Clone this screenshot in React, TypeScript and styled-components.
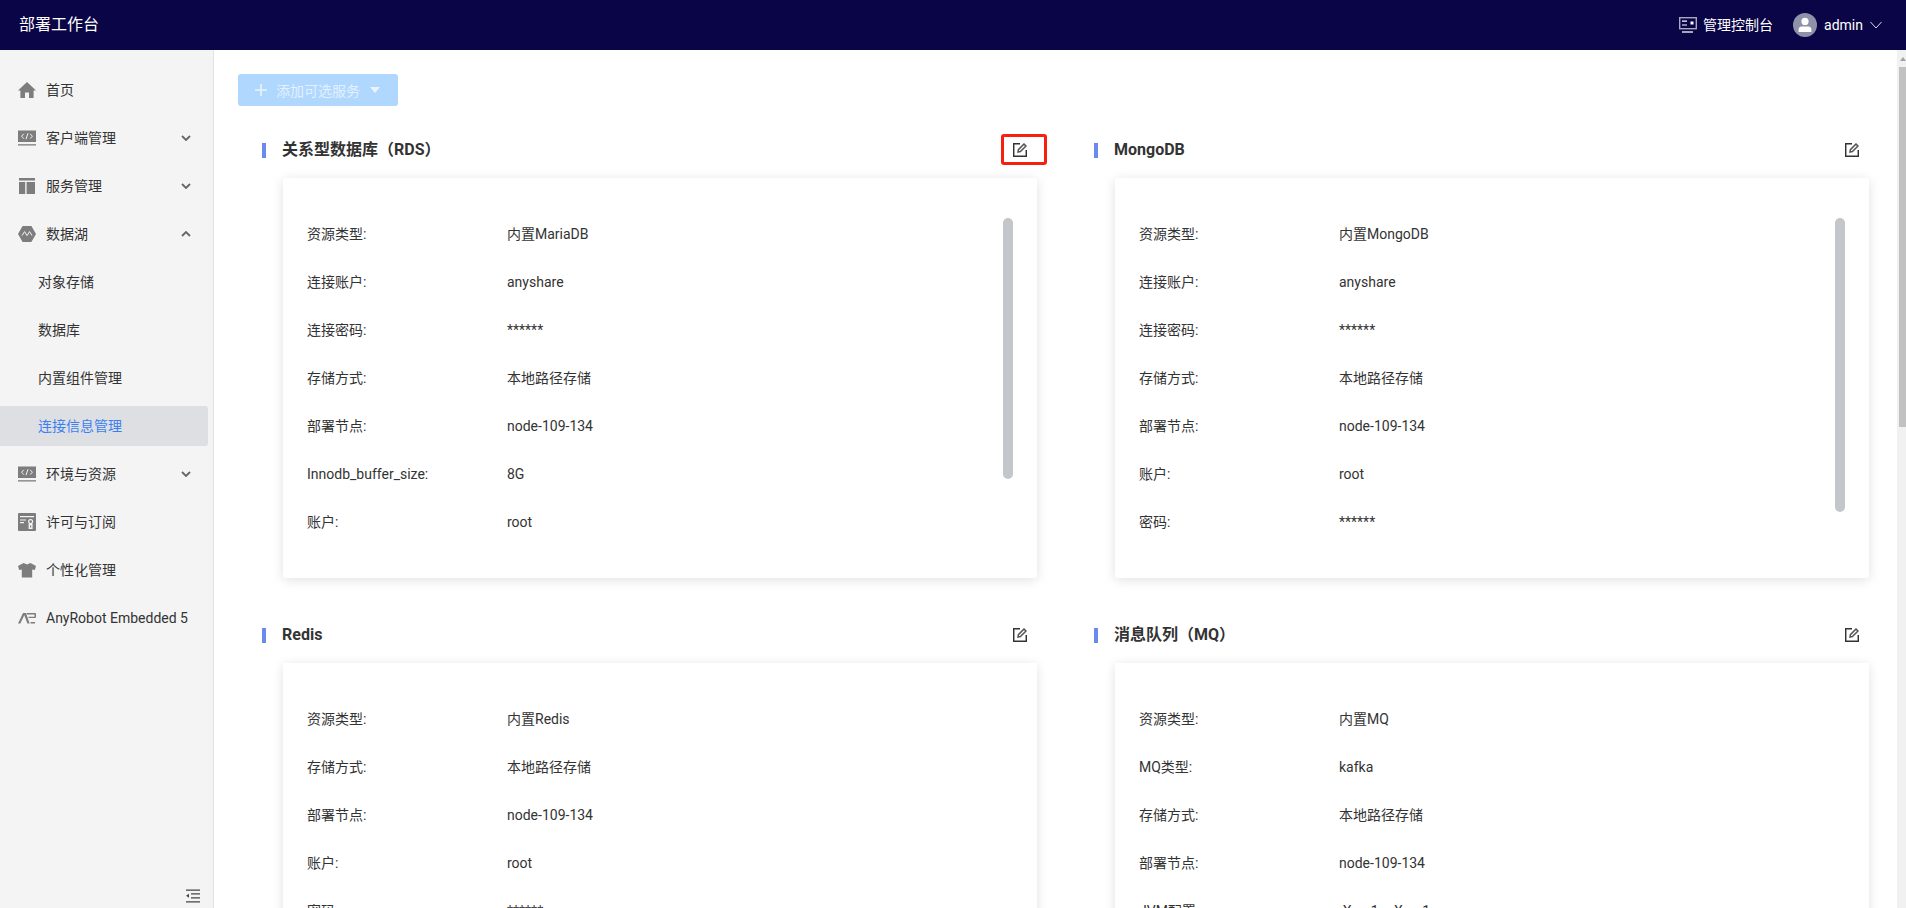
import React from "react";
import styled, { createGlobalStyle } from "styled-components";

const FONT = `Roboto, "Noto Sans CJK SC", sans-serif`;

const GlobalStyle = createGlobalStyle`
  html, body {
    margin: 0;
    height: 100%;
    overflow: hidden;
  }
  body {
    font-family: ${FONT};
    font-size: 14px;
    line-height: 22px;
    color: #333;
  }
  #root {
    height: 100%;
  }
`;

const Page = styled.div`
  display: flex;
  flex-direction: column;
  height: 100vh;
`;

const TopBar = styled.header`
  flex: none;
  height: 50px;
  background: #0a0546;
  color: #fff;
  display: flex;
  align-items: center;
  padding: 0 24px 0 19px;
`;

const Brand = styled.div`
  font-size: 16px;
  flex: 1;
`;

const ConsoleLink = styled.div`
  display: flex;
  align-items: center;
  gap: 6px;
  margin-right: 20px;
`;

const Avatar = styled.svg`
  width: 24px;
  height: 24px;
  margin-right: 7px;
`;

const UserName = styled.span`
  margin-right: 7px;
`;

const Body = styled.div`
  flex: 1;
  display: flex;
  min-height: 0;
`;

const Sidebar = styled.aside`
  flex: none;
  box-sizing: border-box;
  width: 214px;
  background: #f4f4f4;
  border-right: 1px solid #e2e2e2;
  display: flex;
  flex-direction: column;
  padding-top: 20px;
`;

const Menu = styled.nav`
  display: flex;
  flex-direction: column;
  gap: 8px;
`;

const MenuRow = styled.div<{ $child?: boolean; $active?: boolean }>`
  height: 40px;
  width: 208px;
  box-sizing: border-box;
  display: flex;
  align-items: center;
  gap: 10px;
  padding: 0 17px 1px ${(p) => (p.$child ? 38 : 18)}px;
  color: ${(p) => (p.$active ? "#3b7ff2" : "#333")};
  background: ${(p) => (p.$active ? "#dedfe3" : "transparent")};
  border-radius: ${(p) => (p.$active ? "0 3px 3px 0" : "0")};
`;

const MenuLabel = styled.span`
  flex: 1;
  white-space: nowrap;
`;

const IconBox = styled.svg`
  flex: none;
  width: 18px;
  height: 18px;
  fill: #7d7d7d;
`;

const Chevron = styled.svg<{ $up?: boolean }>`
  flex: none;
  width: 10px;
  height: 6px;
  fill: none;
  stroke: #666;
  stroke-width: 1.8;
  transform: ${(p) => (p.$up ? "rotate(180deg)" : "none")};
`;

const CollapseBar = styled.div`
  margin-top: auto;
  display: flex;
  justify-content: flex-end;
  padding: 0 13px 5px 0;
`;

const Main = styled.main`
  flex: 1;
  min-width: 0;
  overflow: hidden;
  background: #fff;
`;

const PageScrollbar = styled.div`
  flex: none;
  width: 9px;
  background: #f1f1f1;
  display: flex;
  flex-direction: column;
  align-items: flex-end;
`;

const ScrollArrow = styled.div`
  height: 17px;
  width: 7px;
  display: flex;
  align-items: center;
  justify-content: center;
`;

const ArrowGlyph = styled.span`
  border-left: 3.5px solid transparent;
  border-right: 3.5px solid transparent;
  border-bottom: 4px solid #a3a3a3;
`;

const PageThumb = styled.div`
  width: 7px;
  height: 360px;
  background: #c1c1c1;
`;

const Content = styled.div`
  padding: 24px 19px 0 24px;
`;

const AddButton = styled.button`
  display: flex;
  align-items: center;
  height: 32px;
  width: 160px;
  box-sizing: border-box;
  padding: 0 0 0 17px;
  border: none;
  border-radius: 3px;
  background: #b0d7fe;
  color: #e3f0fe;
  font-family: ${FONT};
  font-size: 14px;
  margin-bottom: 28px;
`;

const PlusIcon = styled.svg`
  width: 12px;
  height: 12px;
  fill: #eaf4ff;
  margin-right: 9px;
`;

const CaretIcon = styled.svg`
  width: 10px;
  height: 6px;
  fill: #eaf4ff;
  margin-left: 10px;
`;

const SectionGrid = styled.div`
  display: grid;
  grid-template-columns: 1fr 1fr;
  column-gap: 48px;
  row-gap: 41px;
  padding-left: 24px;
`;

const SectionHead = styled.div`
  height: 32px;
  display: flex;
  align-items: center;
  margin-bottom: 12px;
`;

const TitleBar = styled.span`
  width: 4px;
  height: 15px;
  background: #6a8bec;
  margin-right: 16px;
`;

const Title = styled.h3`
  flex: 1;
  margin: 0;
  font-size: 16px;
  font-weight: 700;
  color: #333;
`;

const EditButton = styled.span`
  position: relative;
  display: flex;
  margin-right: 19px;
`;

const EditIcon = styled.svg`
  width: 14px;
  height: 14px;
  fill: none;
  stroke: #333;
  stroke-width: 1.5;
`;

const Highlight = styled.span`
  position: absolute;
  left: -12px;
  top: -9px;
  box-sizing: border-box;
  width: 46px;
  height: 31px;
  border: 3px solid #f5200f;
  border-radius: 3px;
`;

const Card = styled.div`
  position: relative;
  box-sizing: border-box;
  height: 400px;
  margin: 0 9px 0 21px;
  padding: 32px 24px 0;
  background: #fff;
  border-radius: 3px;
  box-shadow: 0 2px 12px rgba(0, 0, 0, 0.12);
  overflow: hidden;
`;

const InfoRow = styled.div`
  box-sizing: border-box;
  height: 48px;
  padding-bottom: 1px;
  display: flex;
  align-items: center;
`;

const InfoLabel = styled.span`
  width: 200px;
  flex: none;
  color: #333;
`;

const InfoValue = styled.span`
  color: #333;
`;

const ScrollThumb = styled.div`
  position: absolute;
  top: 40px;
  right: 24px;
  width: 10px;
  border-radius: 5px;
  background: #c3c6cb;
`;

function HomeIcon() {
  return (
    <IconBox viewBox="0 0 18 18">
      <path d="M9 1 18 9.500H15.600V17H11V11.500H7V17H2.400V9.500H0Z" />
    </IconBox>
  );
}

function CodeIcon() {
  return (
    <IconBox viewBox="0 0 18 18">
      <path d="M0 1.500h18v11.500H0z" />
      <path d="M0 15.200h18v1.300H0z" />
      <path d="M5.800 4.800 3.600 7.200l2.200 2.400M12.200 4.800l2.200 2.400-2.200 2.400M10 4.200 8 10.200" fill="none" stroke="#f4f4f4" strokeWidth="1" />
    </IconBox>
  );
}

function LayoutIcon() {
  return (
    <IconBox viewBox="0 0 18 18">
      <path d="M1 1h16v2.400H1zM1 5h6.200v12H1zM8.600 5H17v12H8.600z" />
    </IconBox>
  );
}

function LakeIcon() {
  return (
    <IconBox viewBox="0 0 18 18">
      <path d="M4.600 1h8.800L18 9l-4.600 8H4.600L0 9z" />
      <path d="M4 10.600 6.600 6.600 9 10.600 11.600 6.600 14 10.600" fill="none" stroke="#f4f4f4" strokeWidth="1" />
    </IconBox>
  );
}

function LicenseIcon() {
  return (
    <IconBox viewBox="0 0 18 18">
      <path d="M1 0h16a1 1 0 0 1 1 1v16a1 1 0 0 1-1 1H1a1 1 0 0 1-1-1V1a1 1 0 0 1 1-1z" />
      <path d="M2 3h14v1.200H2zM2 6.400h6v1.200H2zM2 9h4v1.200H2z" fill="#f4f4f4" />
      <circle cx="12.600" cy="8.600" r="2" fill="none" stroke="#f4f4f4" strokeWidth="1.100" />
      <path d="M10.600 11h4v5h-4z" fill="#f4f4f4" />
      <path d="M12 12.400h1.200v2.200H12z" />
    </IconBox>
  );
}

function ShirtIcon() {
  return (
    <IconBox viewBox="0 0 18 18">
      <path d="M5.600 2 9 3.400 12.400 2 18 5l-1.200 4-2.600-.6V16.600H3.800V8.400L1.200 9 0 5z" />
    </IconBox>
  );
}

function RobotIcon() {
  return (
    <IconBox viewBox="0 0 18 18">
      <path d="M0 14.500 5 4h3l3.600 10.500H9.400L6.300 6.200 2.300 14.500z" />
      <path d="M8.500 4H17a1 1 0 0 1 1 1v3a1 1 0 0 1-1 1h-6.500V7.700h6V5.400H9z" />
      <path d="M12.500 13h4.500v1.500h-4.500z" />
    </IconBox>
  );
}

function DownChevron({ up }: { up?: boolean }) {
  return (
    <Chevron $up={up} viewBox="0 0 10 6">
      <path d="M1 1l4 4 4-4" />
    </Chevron>
  );
}

type MenuEntry = {
  label: string;
  icon?: React.ReactElement;
  arrow?: "up" | "down";
  child?: boolean;
  active?: boolean;
};

const menu: MenuEntry[] = [
  { label: "首页", icon: <HomeIcon /> },
  { label: "客户端管理", icon: <CodeIcon />, arrow: "down" },
  { label: "服务管理", icon: <LayoutIcon />, arrow: "down" },
  { label: "数据湖", icon: <LakeIcon />, arrow: "up" },
  { label: "对象存储", child: true },
  { label: "数据库", child: true },
  { label: "内置组件管理", child: true },
  { label: "连接信息管理", child: true, active: true },
  { label: "环境与资源", icon: <CodeIcon />, arrow: "down" },
  { label: "许可与订阅", icon: <LicenseIcon /> },
  { label: "个性化管理", icon: <ShirtIcon /> },
  { label: "AnyRobot Embedded 5", icon: <RobotIcon /> }
];

type SectionData = {
  title: string;
  highlight?: boolean;
  thumb?: number;
  rows: [string, string][];
};

const sections: SectionData[] = [
  {
    title: "关系型数据库（RDS）",
    highlight: true,
    thumb: 261,
    rows: [
      ["资源类型:", "内置MariaDB"],
      ["连接账户:", "anyshare"],
      ["连接密码:", "******"],
      ["存储方式:", "本地路径存储"],
      ["部署节点:", "node-109-134"],
      ["Innodb_buffer_size:", "8G"],
      ["账户:", "root"]
    ]
  },
  {
    title: "MongoDB",
    thumb: 294,
    rows: [
      ["资源类型:", "内置MongoDB"],
      ["连接账户:", "anyshare"],
      ["连接密码:", "******"],
      ["存储方式:", "本地路径存储"],
      ["部署节点:", "node-109-134"],
      ["账户:", "root"],
      ["密码:", "******"]
    ]
  },
  {
    title: "Redis",
    rows: [
      ["资源类型:", "内置Redis"],
      ["存储方式:", "本地路径存储"],
      ["部署节点:", "node-109-134"],
      ["账户:", "root"],
      ["密码:", "******"]
    ]
  },
  {
    title: "消息队列（MQ）",
    rows: [
      ["资源类型:", "内置MQ"],
      ["MQ类型:", "kafka"],
      ["存储方式:", "本地路径存储"],
      ["部署节点:", "node-109-134"],
      ["JVM配置:", "-Xmx1g -Xms1g"]
    ]
  }
];

function Section({ data }: { data: SectionData }) {
  return (
    <section>
      <SectionHead>
        <TitleBar />
        <Title>{data.title}</Title>
        <EditButton>
          <EditIcon viewBox="0 0 14 14">
            <path d="M7 .7H.7v12.600h12.600V7" />
            <path d="M5 9l.4-2.400L11 1l2 2-5.600 5.600z" stroke="#555" />
          </EditIcon>
          {data.highlight && <Highlight />}
        </EditButton>
      </SectionHead>
      <Card>
        {data.rows.map(([label, value]) => (
          <InfoRow key={label}>
            <InfoLabel>{label}</InfoLabel>
            <InfoValue>{value}</InfoValue>
          </InfoRow>
        ))}
        {data.thumb && <ScrollThumb style={{ height: data.thumb }} />}
      </Card>
    </section>
  );
}

export default function App(): React.ReactElement {
  return (
    <Page>
      <GlobalStyle />
      <TopBar>
        <Brand>部署工作台</Brand>
        <ConsoleLink>
          <svg width="18" height="18" viewBox="0 0 18 18" fill="none">
            <rect x="0.7" y="1.7" width="16.6" height="11" stroke="#a9a7c4" strokeWidth="1.4" />
            <path d="M3 5.200h5M3 9h5" stroke="#fff" strokeWidth="1.200" />
            <path d="M11.500 5.500h3v3h-3z" fill="#fff" />
            <path d="M3 16h11" stroke="#fff" strokeWidth="1.300" />
          </svg>
          管理控制台
        </ConsoleLink>
        <Avatar viewBox="0 0 24 24">
          <circle cx="12" cy="12" r="12" fill="#8e92a9" />
          <circle cx="12" cy="8.400" r="3.600" fill="#fff" />
          <path d="M5.600 19v-2.400c0-2 1.400-3.200 3.200-3.200h6.400c1.800 0 3.200 1.200 3.200 3.200V19z" fill="#fff" />
        </Avatar>
        <UserName>admin</UserName>
        <svg width="12" height="8" viewBox="0 0 12 8" fill="none">
          <path d="M.5 1 6 7l5.500-6" stroke="#d9d8e6" strokeWidth="1" />
        </svg>
      </TopBar>
      <Body>
        <Sidebar>
          <Menu>
            {menu.map((item) => (
              <MenuRow key={item.label} $child={item.child} $active={item.active}>
                {item.icon}
                <MenuLabel>{item.label}</MenuLabel>
                {item.arrow && <DownChevron up={item.arrow === "up"} />}
              </MenuRow>
            ))}
          </Menu>
          <CollapseBar>
            <svg width="14" height="14" viewBox="0 0 14 14">
              <path d="M0 .5h14v1.200H0zM5 4.200h9v1.200H5zM5 8.200h9v1.200H5zM0 12.300h14v1.200H0z" fill="#444" />
              <path d="M3 4.800v4L0 6.800z" fill="#444" />
            </svg>
          </CollapseBar>
        </Sidebar>
        <Main>
          <Content>
            <AddButton type="button" disabled>
              <PlusIcon viewBox="0 0 12 12">
                <path d="M5.200 0h1.600v5.200H12v1.600H6.800V12H5.200V6.800H0V5.200h5.200z" />
              </PlusIcon>
              添加可选服务
              <CaretIcon viewBox="0 0 10 6">
                <path d="M0 0h10L5 6z" />
              </CaretIcon>
            </AddButton>
            <SectionGrid>
              {sections.map((s) => (
                <Section key={s.title} data={s} />
              ))}
            </SectionGrid>
          </Content>
        </Main>
        <PageScrollbar>
          <ScrollArrow>
            <ArrowGlyph />
          </ScrollArrow>
          <PageThumb />
        </PageScrollbar>
      </Body>
    </Page>
  );
}
